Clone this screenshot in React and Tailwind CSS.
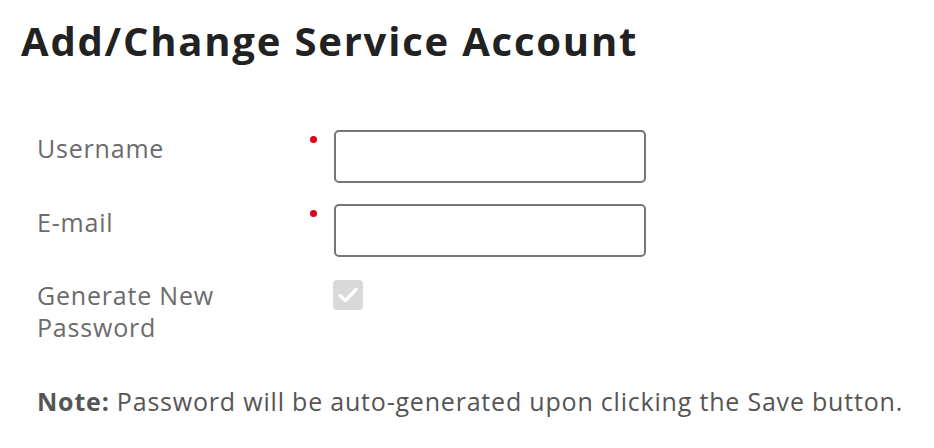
import { useState } from "react";

const Field = ({ label, value, onChange }) => (
  <div className="flex items-start">
    <label className="w-[273px] pt-[2px] text-[25px] leading-[32px] tracking-[0.8px] text-[#6b6b6b]">
      {label}
    </label>
    <span className="mt-[6px] h-[7px] w-[7px] rounded-full bg-[#e1001a]" />
    <input
      type="text"
      value={value}
      onChange={onChange}
      className="ml-[17px] h-[53px] w-[312px] rounded-[5px] border-2 border-[#767676] bg-white px-3 text-[20px] outline-none"
    />
  </div>
);

const App = () => {
  const [form, setForm] = useState({ username: "", email: "" });

  return (
    <div
      className="min-h-[448px] bg-white pl-[21px] pt-[15px]"
      style={{ fontFamily: '"Open Sans", sans-serif' }}
    >
      <h1
        className="text-[40px] font-bold leading-[52px] tracking-[1.8px] text-[#222]"
        style={{ fontFamily: '"Open Sans", sans-serif' }}
      >
        Add/Change Service Account
      </h1>

      <div className="mt-[63px] flex flex-col gap-[21px] pl-[16px]">
        <Field
          label="Username"
          value={form.username}
          onChange={(e) => setForm({ ...form, username: e.target.value })}
        />
        <Field
          label="E-mail"
          value={form.email}
          onChange={(e) => setForm({ ...form, email: e.target.value })}
        />
        <div className="flex items-start">
          <label className="w-[296px] pt-[1px] text-[25px] leading-[32px] tracking-[0.8px] text-[#6b6b6b]">
            Generate New
            <br />
            Password
          </label>
          <span className="mt-[2px] flex h-[30px] w-[30px] items-center justify-center rounded-[4px] bg-[#d9d9d9]">
            <svg width="22" height="18" viewBox="0 0 22 18" fill="none">
              <path
                d="M3 9.5 L8.5 14.5 L19 3.5"
                stroke="white"
                strokeWidth="3.4"
                strokeLinecap="round"
                strokeLinejoin="round"
              />
            </svg>
          </span>
        </div>
      </div>

      <p className="mt-[42px] pl-[16px] text-[25px] leading-[32px] tracking-[0.8px] text-[#555]">
        <span className="font-bold">Note:</span> Password will be auto-generated upon
        clicking the Save button.
      </p>
    </div>
  );
};

export default App;
